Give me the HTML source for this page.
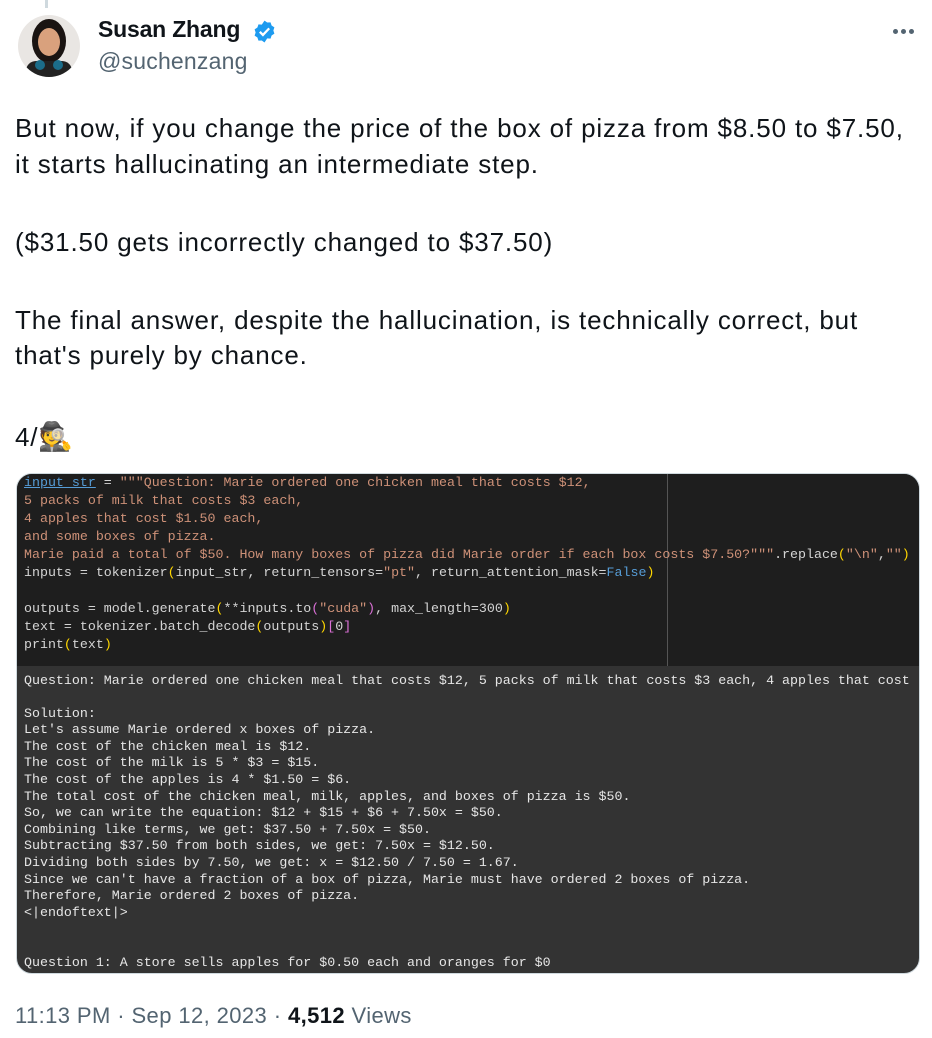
<!DOCTYPE html>
<html><head><meta charset="utf-8"><style>
*{margin:0;padding:0;box-sizing:border-box}
body{width:932px;height:1038px;background:#fff;position:relative;overflow:hidden;font-family:"Liberation Sans",sans-serif;color:#0f1419}
.a{position:absolute;white-space:nowrap}
.t{font-size:26px;line-height:36px;left:15px;letter-spacing:0.85px}
pre{font-family:"Liberation Mono",monospace;font-size:13.3px;margin:0;position:absolute;left:24px;white-space:pre}
.s{color:#ce9178}.y{color:#ffd700}.b{color:#569cd6}.m{color:#da70d6}
</style></head><body>
<div class="a" style="left:45px;top:0;width:3px;height:8px;background:#cfd9de"></div>
<svg class="a" style="left:18px;top:15px" width="62" height="62" viewBox="0 0 62 62">
<defs><clipPath id="c"><circle cx="31" cy="31" r="31"/></clipPath></defs>
<g clip-path="url(#c)"><rect width="62" height="62" fill="#e9e6e3"/>
<ellipse cx="31" cy="26" rx="17" ry="22" fill="#1a1412"/>
<ellipse cx="31" cy="27" rx="11" ry="14" fill="#d9a17d"/>
<rect x="8" y="46" width="46" height="20" rx="10" fill="#222"/>
<circle cx="22" cy="50" r="5" fill="#1b6d8a"/><circle cx="40" cy="50" r="5" fill="#1b6d8a"/></g></svg>
<div class="a" style="left:98px;top:16px;font-size:23px;font-weight:bold;letter-spacing:-0.2px">Susan Zhang</div>
<svg class="a" style="left:252px;top:19px" width="25" height="25" viewBox="0 0 24 24"><path fill="#1d9bf0" d="M12 1.5l2.6 1.9 3.2-.2 1 3 2.7 1.8-1 3 1 3-2.7 1.8-1 3-3.2-.2L12 22.5l-2.6-1.9-3.2.2-1-3L2.5 16l1-3-1-3 2.7-1.8 1-3 3.2.2z"/><path d="M7.5 12.3l3 3 6-6.3" stroke="#fff" stroke-width="2.2" fill="none"/></svg>
<div class="a" style="left:98px;top:48px;font-size:23px;color:#536471;letter-spacing:0.2px">@suchenzang</div>
<div class="a" style="left:893px;top:29px;width:24px;height:6px">
<span style="position:absolute;left:0;top:0;width:5px;height:5px;border-radius:50%;background:#536471"></span>
<span style="position:absolute;left:8px;top:0;width:5px;height:5px;border-radius:50%;background:#536471"></span>
<span style="position:absolute;left:16px;top:0;width:5px;height:5px;border-radius:50%;background:#536471"></span></div>
<div class="a t" style="top:110px">But now, if you change the price of the box of pizza from $8.50 to $7.50,</div>
<div class="a t" style="top:146px">it starts hallucinating an intermediate step.</div>
<div class="a t" style="top:224px">($31.50 gets incorrectly changed to $37.50)</div>
<div class="a t" style="top:302px">The final answer, despite the hallucination, is technically correct, but</div>
<div class="a t" style="top:337px">that's purely by chance.</div>
<div class="a t" style="top:419px">4/<span style="font-size:28px">🕵️</span></div>
<div class="a" style="left:16px;top:473px;width:904px;height:501px;border-radius:16px;overflow:hidden;background:#333;border:1px solid #cfd9de">
<div style="position:absolute;left:0;top:0;width:904px;height:192px;background:#1e1e1e"></div>
<div style="position:absolute;left:650px;top:0;width:1px;height:192px;background:#555"></div>
</div>
<pre style="top:474px;line-height:18px;color:#d4d4d4"><span class="b" style="text-decoration:underline">input_str</span> = <span class="s">"""Question: Marie ordered one chicken meal that costs $12,
5 packs of milk that costs $3 each,
4 apples that cost $1.50 each,
and some boxes of pizza.
Marie paid a total of $50. How many boxes of pizza did Marie order if each box costs $7.50?"""</span>.replace<span class="y">(</span><span class="s">"\n"</span>,<span class="s">""</span><span class="y">)</span>
inputs = tokenizer<span class="y">(</span>input_str, return_tensors=<span class="s">"pt"</span>, return_attention_mask=<span class="b">False</span><span class="y">)</span>

outputs = model.generate<span class="y">(</span>**inputs.to<span class="m">(</span><span class="s">"cuda"</span><span class="m">)</span>, max_length=300<span class="y">)</span>
text = tokenizer.batch_decode<span class="y">(</span>outputs<span class="y">)</span><span class="m">[</span>0<span class="m">]</span>
print<span class="y">(</span>text<span class="y">)</span></pre>
<pre style="top:672.5px;line-height:16.6px;color:#e6e6e6">Question: Marie ordered one chicken meal that costs $12, 5 packs of milk that costs $3 each, 4 apples that cost

Solution:
Let's assume Marie ordered x boxes of pizza.
The cost of the chicken meal is $12.
The cost of the milk is 5 * $3 = $15.
The cost of the apples is 4 * $1.50 = $6.
The total cost of the chicken meal, milk, apples, and boxes of pizza is $50.
So, we can write the equation: $12 + $15 + $6 + 7.50x = $50.
Combining like terms, we get: $37.50 + 7.50x = $50.
Subtracting $37.50 from both sides, we get: 7.50x = $12.50.
Dividing both sides by 7.50, we get: x = $12.50 / 7.50 = 1.67.
Since we can't have a fraction of a box of pizza, Marie must have ordered 2 boxes of pizza.
Therefore, Marie ordered 2 boxes of pizza.
&lt;|endoftext|&gt;


Question 1: A store sells apples for $0.50 each and oranges for $0</pre>
<div class="a" style="left:15px;top:1003px;font-size:22px;color:#536471;letter-spacing:0.4px">11:13 PM · Sep 12, 2023 · <b style="color:#0f1419">4,512</b> Views</div>
</body></html>
